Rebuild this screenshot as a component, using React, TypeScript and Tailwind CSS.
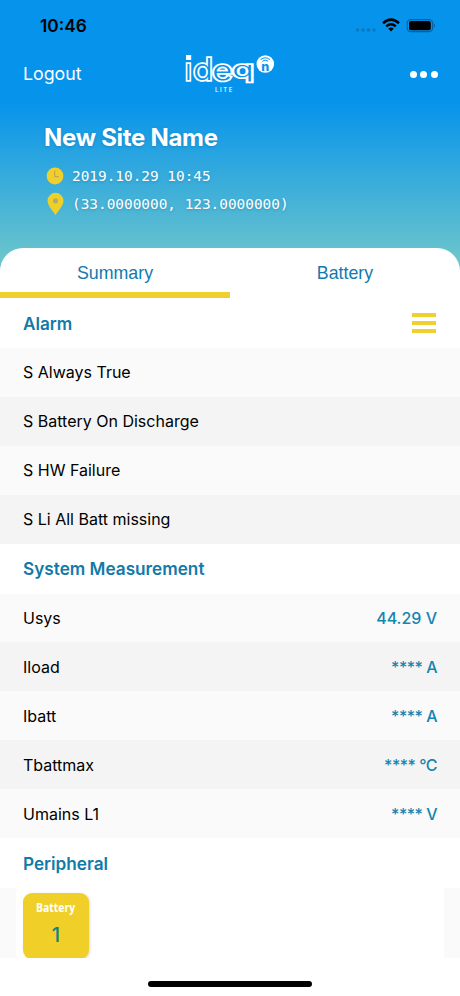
import clsx from "clsx"

type Measurement = {
    name: string
    value: string
}

const alarms = [
    "S Always True",
    "S Battery On Discharge",
    "S HW Failure",
    "S Li All Batt missing",
]

const measurements: Measurement[] = [
    { name: "Usys", value: "44.29 V" },
    { name: "Iload", value: "**** A" },
    { name: "Ibatt", value: "**** A" },
    { name: "Tbattmax", value: "**** °C" },
    { name: "Umains L1", value: "**** V" },
]

function StatusBar() {
    return (
        <div className="h-[50px] pt-[1px] pl-10 pr-[24px] flex items-center justify-between text-black">
            <span className="text-[17.3px] font-semibold">10:46</span>
            <svg width="82" height="16" viewBox="0 0 82 16">
                <g fill="#0b78c0">
                    <circle cx="3.5" cy="12" r="1.8" />
                    <circle cx="9" cy="12" r="1.8" />
                    <circle cx="14.5" cy="12" r="1.8" />
                    <circle cx="20" cy="12" r="1.8" />
                </g>
                <g fill="none" stroke="black" strokeWidth="2.5">
                    <path d="M29 5.2 Q37 -2 45 5.2" />
                    <path d="M32.2 8.4 Q37 4.2 41.8 8.4" />
                </g>
                <path d="M34.2 10.6 Q37 8.3 39.8 10.6 L37 13.6Z" />
                <rect x="53.2" y="1.6" width="25.4" height="12" rx="3.6" fill="none" stroke="#075f98" strokeWidth="1.1" />
                <rect x="55" y="3" width="21.8" height="9.2" rx="2" />
                <path d="M79.8 5.4 Q82 7.6 79.8 9.8Z" fill="#075f98" />
            </svg>
        </div>
    )
}

function Logo() {
    return (
        <svg className="-mt-[3px]" width="92" height="42" viewBox="0 0 92 42">
            <g
                fontFamily="Inter, sans-serif"
                fontWeight="300"
                fill="#0893e9"
                stroke="white"
                strokeWidth="3.4"
                style={{ paintOrder: "stroke" }}
            >
                <text x="0" y="28" fontSize="28.5">ı</text>
                <text x="8.3" y="28" fontSize="29.5" textLength="19.5" lengthAdjust="spacingAndGlyphs">d</text>
                <text x="27.3" y="28" fontSize="26.5" textLength="20" lengthAdjust="spacingAndGlyphs">e</text>
                <text x="47.3" y="24.5" fontSize="21.5" textLength="21.5" lengthAdjust="spacingAndGlyphs">q</text>
            </g>
            <rect x="1" y="3" width="5.2" height="5" fill="white" />
            <circle cx="80.3" cy="12" r="8.8" fill="white" />
            <g fill="none" stroke="#0893e9" strokeWidth="1">
                <path d="M75.6 7.6 Q80.3 4 85 7.6" />
                <path d="M77.4 9.2 Q80.3 7 83.2 9.2" />
            </g>
            <text x="80.3" y="18.6" textAnchor="middle" fontFamily="Inter, sans-serif" fontSize="12.5" fontWeight="800" fill="#0893e9">n</text>
            <text x="30" y="39.6" fontFamily="Inter, sans-serif" fontSize="6" fontWeight="500" letterSpacing="1.6" fill="white">LITE</text>
        </svg>
    )
}

function NavBar() {
    return (
        <nav className="h-[48px] pl-[23px] pr-[22px] flex items-center justify-between">
            <button className="w-[90px] text-left text-[17.8px]">Logout</button>
            <Logo />
            <button className="w-[90px] flex justify-end gap-[3.6px]">
                <span className="size-[7px] rounded-full bg-white" />
                <span className="size-[7px] rounded-full bg-white" />
                <span className="size-[7px] rounded-full bg-white" />
            </button>
        </nav>
    )
}

function SiteInfo() {
    return (
        <div className="pl-[44px] pt-[22px] [text-shadow:0_1px_3px_rgba(0,60,110,0.25)]">
            <h1 className="h-9 leading-9 text-[24px] tracking-[-0.3px] font-bold">New Site Name</h1>
            <div className="mt-[6px] h-7 flex items-center gap-[8px] pl-[2px] font-['DejaVu_Sans_Mono',monospace] text-[14.4px]">
                <svg width="18" height="18" viewBox="0 0 18 18">
                    <circle cx="9" cy="9" r="8.4" fill="#efd02b" />
                    <path d="M8.7 3.6V9.6H13" fill="none" stroke="#c6a84a" strokeWidth="1.3" />
                </svg>
                <span className="pt-[2px]">2019.10.29 10:45</span>
            </div>
            <div className="h-7 flex items-center gap-[8px] pl-[2px] font-['DejaVu_Sans_Mono',monospace] text-[14.4px]">
                <svg width="18" height="24" viewBox="0 0 18 24">
                    <path d="M9.5 23C6.5 18.5 1.5 13.5 1.5 8.8A8 8 0 0 1 17.5 8.8C17.5 13.5 12.5 18.5 9.5 23Z" fill="#efd02b" />
                    <circle cx="9.5" cy="8.8" r="2.6" fill="#b5ac62" />
                </svg>
                <span className="pt-[2px]">(33.0000000, 123.0000000)</span>
            </div>
        </div>
    )
}

type SectionTitleProps = {
    title: string
    children?: React.ReactNode
}

function SectionTitle({ title, children }: SectionTitleProps) {
    return (
        <div className="h-[50px] shrink-0 px-[23px] flex items-center justify-between">
            <h2 className="pt-px text-[17.2px] font-semibold text-[#117aa8]">{title}</h2>
            {children}
        </div>
    )
}

type RowProps = {
    name: string
    value?: string
    shaded: boolean
}

function Row({ name, value, shaded }: RowProps) {
    const masked = value?.startsWith("*")

    return (
        <li className={clsx("h-[48.9px] px-[23px] flex items-center justify-between text-[16px]", shaded ? "bg-[#f4f4f4]" : "bg-[#fafafa]")}>
            <span>{name}</span>
            {value && <span className={clsx("font-medium text-[#1485b0]", masked && "tracking-[-0.5px]")}>{value}</span>}
        </li>
    )
}

export default function App() {
    return (
        <div className="w-[460px] h-[996px] overflow-hidden flex flex-col bg-white text-black font-[Inter,sans-serif]">
            <header className="h-[278px] shrink-0 text-white bg-[linear-gradient(#0593eb_0px,#0593eb_100px,#6bc5cc_260px)]">
                <StatusBar />
                <NavBar />
                <SiteInfo />
            </header>

            <main className="-mt-[30px] flex flex-col rounded-t-[23px] bg-white">
                <div className="h-[50px] flex font-['Liberation_Sans',sans-serif] text-[17.8px] text-[#117aae]">
                    <button className="flex-1 border-b-[6px] border-[#eed02e] pt-[6px]">Summary</button>
                    <button className="flex-1 border-b-[6px] border-transparent pt-[6px]">Battery</button>
                </div>

                <SectionTitle title="Alarm">
                    <div className="w-6 mr-px flex flex-col gap-[4px]">
                        <span className="h-1 bg-[#eed02e]" />
                        <span className="h-1 bg-[#eed02e]" />
                        <span className="h-1 bg-[#eed02e]" />
                    </div>
                </SectionTitle>
                <ul>
                    {alarms.map((alarm, i) => (
                        <Row key={alarm} name={alarm} shaded={i % 2 === 1} />
                    ))}
                </ul>

                <SectionTitle title="System Measurement" />
                <ul>
                    {measurements.map((m, i) => (
                        <Row key={m.name} name={m.name} value={m.value} shaded={i % 2 === 1} />
                    ))}
                </ul>

                <SectionTitle title="Peripheral" />
                <div className="h-[70px] px-4 bg-[#fafafa] overflow-hidden">
                    <div className="h-full bg-white pl-[7px] pt-[5px]">
                        <div className="w-[66px] h-[66px] rounded-[9px] bg-[#f0d028] shadow-[1px_1px_3px_rgba(0,0,0,0.15)] flex flex-col items-center">
                            <span className="mt-[6px] leading-[18px] font-['Open_Sans',sans-serif] text-[12px] font-bold text-white scale-x-[0.87]">Battery</span>
                            <span className="mt-[4px] leading-7 text-[20px] font-medium text-[#11808a]">1</span>
                        </div>
                    </div>
                </div>
            </main>

            <div className="mt-auto mb-[9px] mx-auto w-[164px] h-[6px] rounded-full bg-black" />
        </div>
    )
}
